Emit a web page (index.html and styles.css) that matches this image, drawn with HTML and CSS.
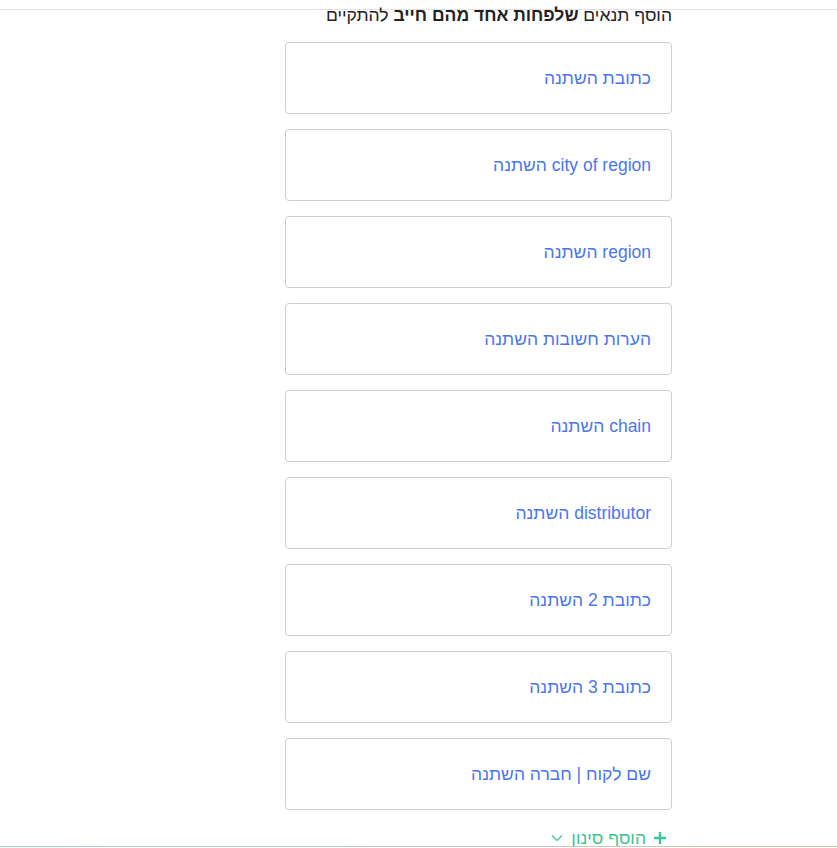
FILE: index.html
```html
<!DOCTYPE html>
<html lang="he" dir="rtl">
<head>
    <meta charset="UTF-8">
    <title>סינון</title>
    <link rel="stylesheet" href="styles.css">
</head>
<body>
    <div class="top-bar"></div>
    <div class="panel">
        <div class="title">הוסף תנאים <b>שלפחות אחד מהם חייב</b> להתקיים</div>
        <div class="cond-list">
            <div class="cond">כתובת השתנה</div>
            <div class="cond">city of region השתנה</div>
            <div class="cond">region השתנה</div>
            <div class="cond">הערות חשובות השתנה</div>
            <div class="cond">chain השתנה</div>
            <div class="cond">distributor השתנה</div>
            <div class="cond">כתובת 2 השתנה</div>
            <div class="cond">כתובת 3 השתנה</div>
            <div class="cond">שם לקוח | חברה השתנה</div>
        </div>
        <!-- הוספת סינון -->
        <div class="add-filter">
            <svg class="plus" width="12" height="12" viewBox="0 0 12 12"><path d="M6 0 V12 M0 6 H12" stroke="#3dc493" stroke-width="2.4"/></svg>
            <span>הוסף סינון</span>
            <svg class="chev" width="12" height="8" viewBox="0 0 12 8"><path d="M1 1.5 L6 6.5 L11 1.5" fill="none" stroke="#3dc493" stroke-width="1.2"/></svg>
        </div>
    </div>
    <div class="bottom-line"></div>
</body>
</html>
```

FILE: styles.css
```css
/* בסיס */
body, html {
    margin: 0;
    padding: 0;
    height: 100%;
    overflow: hidden;
    background: #fff;
    font-family: 'Liberation Sans', 'DejaVu Sans', sans-serif;
}
/* פס עליון */
.top-bar {
    height: 9px;
    border-bottom: 1px solid #e3e3e3;
}
/* עמודת התנאים */
.panel {
    width: 387px;
    margin-right: 165px;
}
.title {
    font-size: 17.5px;
    line-height: 20px;
    margin-top: -5px;
    color: #222;
}
.title b {
    font-weight: bold;
}
.cond-list {
    display: flex;
    flex-direction: column;
    gap: 15px;
    margin-top: 17px;
}
.cond {
    height: 70px;
    border: 1px solid #cdcfd2;
    border-radius: 4px;
    padding: 0 20px;
    display: flex;
    align-items: center;
    font-size: 17.5px;
    color: #4a76ef;
}
/* כפתור הוספה */
.add-filter {
    display: flex;
    align-items: center;
    gap: 8px;
    margin-top: 19px;
    padding-right: 6px;
    color: #3dc493;
    font-size: 17.5px;
    line-height: 18px;
}
/* קו תחתון */
.bottom-line {
    position: fixed;
    left: 0;
    right: 0;
    bottom: 1px;
    height: 1px;
    background: linear-gradient(to right, #a9d3d6, #d8c2ae);
}
```
